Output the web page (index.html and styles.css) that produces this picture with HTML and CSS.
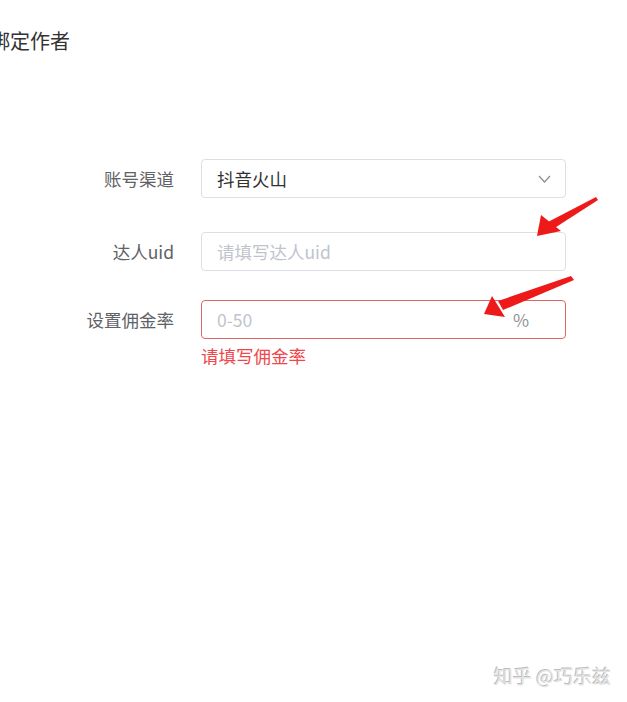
FILE: index.html
```html
<!DOCTYPE html>
<html>
<head lang="zh">
    <meta charset="UTF-8">
    <title>绑定作者</title>
    <link rel="stylesheet" href="styles.css">
</head>
<body>
<div class="page">
    <h2 class="title">绑定作者</h2>
    <div class="form">
        <div class="row row1">
            <label class="label">账号渠道</label>
            <div class="box select">
                <span class="value">抖音火山</span>
                <svg class="chevron" width="13" height="8" viewBox="0 0 13 8"><path d="M1 1 L6.5 7 L12 1" fill="none" stroke="#8a8d93" stroke-width="1.2"/></svg>
            </div>
        </div>
        <div class="row row2">
            <label class="label">达人uid</label>
            <div class="box">
                <span class="placeholder">请填写达人uid</span>
            </div>
        </div>
        <div class="row row3">
            <label class="label">设置佣金率</label>
            <div class="field">
                <div class="box error">
                    <span class="placeholder">0-50</span>
                    <span class="suffix">%</span>
                </div>
                <div class="errorText">请填写佣金率</div>
            </div>
        </div>
    </div>
    <!-- annotation arrows -->
    <svg class="marks" width="627" height="702" viewBox="0 0 627 702">
        <path d="M596 197 L598 200 L553 229 L548 222 Z" fill="#ee1a1a"/>
        <path d="M537 236 L541 215 L561 231 Z" fill="#ee1a1a"/>
        <path d="M571 276 L574 280 L503 310 L498 301 Z" fill="#ee1a1a"/>
        <path d="M484 314 L492 296 L505 317 Z" fill="#ee1a1a"/>
    </svg>
    <div class="watermark">知乎 @巧乐兹</div>
</div>
</body>
</html>
```

FILE: styles.css
```css
*{
    margin: 0;
    padding: 0;
    box-sizing: border-box;
}
body{
    background: #fff;
    font-family: "Noto Sans CJK SC", "Microsoft YaHei", sans-serif;
    width: 627px;
    height: 702px;
    overflow: hidden;
}
.page{
    position: relative;
    height: 702px;
}
.title{
    font-size: 20px;
    font-weight: normal;
    color: #333;
    line-height: 28px;
    padding-top: 27px;
    margin-left: -10px;
}
.form{
    margin-top: 104px;
}
.row{
    display: flex;
    align-items: flex-start;
}
.row2{
    margin-top: 34px;
}
.row3{
    margin-top: 29px;
}
.label{
    width: 174px;
    text-align: right;
    font-size: 17.5px;
    color: #606266;
    line-height: 39px;
    margin-right: 27px;
}
.box{
    width: 365px;
    height: 39px;
    border: 1px solid #dcdfe6;
    border-radius: 4px;
    display: flex;
    align-items: center;
    padding: 0 14px 0 15px;
    font-size: 17.5px;
}
.value{
    color: #303133;
    flex: 1;
}
.placeholder{
    color: #c0c4cc;
    flex: 1;
}
.chevron{
    display: block;
}
.box.error{
    border-color: #e06666;
    padding-right: 36px;
}
.suffix{
    color: #909399;
}
.errorText{
    color: #f0454a;
    font-size: 17.5px;
    line-height: 20px;
    margin-top: 7px;
}
.marks{
    position: absolute;
    left: 0;
    top: 0;
}
.watermark{
    position: absolute;
    left: 494px;
    top: 663px;
    font-size: 19px;
    line-height: 26px;
    color: #e4e4e4;
    text-shadow: -1px -1px 0 #bdbdbd;
}
```
